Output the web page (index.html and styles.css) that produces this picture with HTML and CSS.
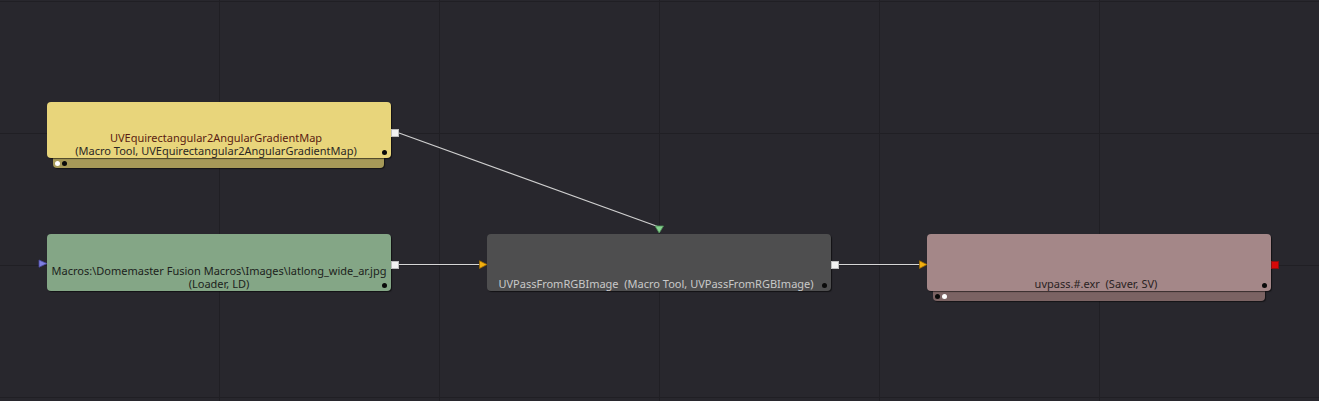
FILE: index.html
```html
<!DOCTYPE html>
<html>
<head>
<meta charset="utf-8">
<link rel="stylesheet" href="styles.css">
</head>
<body>
<div class="flow">
  <div class="node node-yellow">
    <div class="body">
      <span class="name">UVEquirectangular2AngularGradientMap</span>
      <span class="sub">(Macro Tool, UVEquirectangular2AngularGradientMap)</span>
      <i class="dot dot-corner"></i>
    </div>
    <div class="tab"><i class="pip pip-white"></i><i class="pip pip-black"></i></div>
  </div>

  <div class="node node-green">
    <div class="body">
      <span>Macros:\Domemaster Fusion Macros\Images\latlong_wide_ar.jpg</span>
      <span>(Loader, LD)</span>
      <i class="dot dot-corner"></i>
    </div>
  </div>

  <div class="node node-grey">
    <div class="body">
      <span>UVPassFromRGBImage&nbsp; (Macro Tool, UVPassFromRGBImage)</span>
      <i class="dot dot-corner"></i>
    </div>
  </div>

  <div class="node node-pink">
    <div class="body">
      <span>uvpass.#.exr&nbsp; (Saver, SV)</span>
      <i class="dot dot-corner"></i>
    </div>
    <div class="tab"><i class="pip pip-black"></i><i class="pip pip-white"></i></div>
  </div>

  <svg class="wires" width="1319" height="401" viewBox="0 0 1319 401">
    <line x1="399" y1="133" x2="659" y2="227" stroke="#cfcfcf" stroke-width="1.2"/>
    <line x1="398" y1="264.5" x2="480" y2="264.5" stroke="#d6d6d6" stroke-width="1"/>
    <line x1="838" y1="264.5" x2="920" y2="264.5" stroke="#d6d6d6" stroke-width="1"/>

    <rect x="391.5" y="129.5" width="7" height="7" fill="#f2f2f2" stroke="#bdbdbd" stroke-width="1"/>
    <rect x="391.5" y="261.5" width="7" height="7" fill="#f2f2f2" stroke="#bdbdbd" stroke-width="1"/>
    <rect x="831.5" y="261.5" width="7" height="7" fill="#f2f2f2" stroke="#bdbdbd" stroke-width="1"/>
    <rect x="1271.5" y="261.5" width="7" height="7" fill="#d80808" stroke="#8c1010" stroke-width="1"/>

    <polygon points="655,226 663.5,226 659.2,233" fill="#86d28f" stroke="#4f8f58" stroke-width="0.8"/>
    <polygon points="479.5,260.8 479.5,268.4 487,264.6" fill="#f2b010" stroke="#a06c00" stroke-width="0.8"/>
    <polygon points="919.5,260.8 919.5,268.4 927,264.6" fill="#f2b010" stroke="#a06c00" stroke-width="0.8"/>
    <polygon points="39,260 39,267.2 47,263.6" fill="#7f7fe0" stroke="#4a4aa0" stroke-width="0.8"/>
  </svg>
</div>
</body>
</html>
```

FILE: styles.css
```css
html, body {
  margin: 0;
  padding: 0;
  background: #28272d;
}

.flow {
  position: relative;
  width: 1319px;
  height: 401px;
  overflow: hidden;
  background-color: #28272d;
  background-image:
    linear-gradient(to right, #201f24 0, #201f24 1px, transparent 1px),
    linear-gradient(to bottom, #201f24 0, #201f24 1px, transparent 1px);
  background-size: 220px 132px, 220px 132px;
  background-position: 219px 0, 0 1px;
  font-family: "Noto Sans", "Open Sans", sans-serif;
  font-size: 11px;
  line-height: 13px;
}

.node {
  position: absolute;
  width: 344px;
  display: flex;
  flex-direction: column;
}

.body {
  position: relative;
  height: 57px;
  box-sizing: border-box;
  border-radius: 4px;
  display: flex;
  flex-direction: column;
  justify-content: flex-end;
  align-items: center;
  text-align: center;
  padding: 0 6px 1px 0;
  box-shadow: 1px 1px 1px rgba(0, 0, 0, 0.55);
  z-index: 1;
  white-space: nowrap;
}

.tab {
  height: 10px;
  border-radius: 0 0 4px 4px;
  display: flex;
  align-items: center;
  gap: 2px;
  padding-left: 2px;
  box-shadow: 1px 1px 1px rgba(0, 0, 0, 0.5);
}

.pip {
  width: 5px;
  height: 5px;
  border-radius: 50%;
  display: block;
}
.pip-white { background: #ffffff; }
.pip-black { background: #0a0a0a; }

.dot {
  position: absolute;
  width: 5px;
  height: 5px;
  border-radius: 50%;
  background: #0a0a0a;
}
.dot-corner { right: 4px; bottom: 3px; }

/* yellow macro */
.node-yellow { left: 47px; top: 102px; }
.node-yellow .body { height: 56px; background: #e8d57b; color: #2b2724; }
.node-yellow .name { color: #5a1c12; }
.node-yellow .tab { margin: 0 7px 0 6px; background: #a69958; }

/* green loader */
.node-green { left: 47px; top: 234px; }
.node-green .body { background: #84a686; color: #1c1f1c; padding-right: 0; }

/* grey macro */
.node-grey { left: 487px; top: 234px; }
.node-grey .body { background: #4e4e4f; color: #c9c9c9; padding-bottom: 1px; }

/* pink saver */
.node-pink { left: 927px; top: 234px; }
.node-pink .body { background: #a48788; color: #2a2222; }
.node-pink .tab { margin: 0 6px 0 6px; background: #7b6363; }

.wires {
  position: absolute;
  left: 0;
  top: 0;
  z-index: 2;
  pointer-events: none;
}
```
